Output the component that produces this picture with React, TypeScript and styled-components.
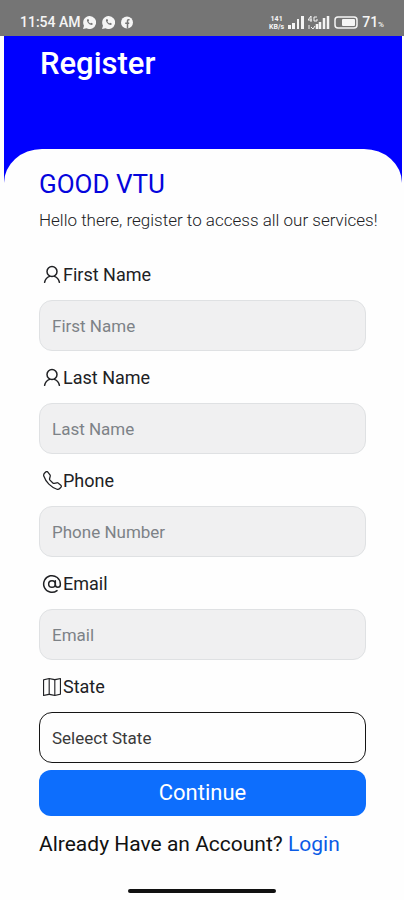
import React from "react";
import styled, { createGlobalStyle } from "styled-components";
import { AtSign } from "lucide-react";
import { BsMap, BsTelephone } from "react-icons/bs";

const GlobalStyle = createGlobalStyle`
  * { box-sizing: border-box; }
  body {
    margin: 0;
    background: #fefefe;
    color: #202124;
    font-family: Roboto, "Liberation Sans", sans-serif;
  }
`;

const Screen = styled.div`
  display: flex;
  flex-direction: column;
  min-height: 100vh;
`;

const StatusBar = styled.div`
  display: flex;
  justify-content: space-between;
  height: 36px;
  padding: 9px 20px 0;
  background: #757575;
  color: #f5f5f5;
  font-size: 14px;
  font-weight: 500;
  line-height: 27px;
`;

const StatusGroup = styled.div<{ $gap: number }>`
  display: flex;
  align-items: center;
  gap: ${(p) => p.$gap}px;
  height: 27px;
`;

const NoticeIcons = styled.span`
  display: flex;
  gap: 6px;
  margin-left: 2px;
`;

const Speed = styled.span`
  display: flex;
  flex-direction: column;
  font-size: 7px;
  font-weight: 700;
  line-height: 8px;
  text-align: center;
`;

const Level = styled.span`
  display: flex;
  align-items: center;
`;

const Percent = styled.small`
  padding-top: 4px;
  font-size: 8px;
  line-height: 12px;
`;

const Hero = styled.header`
  margin: 0 2px 0 4px;
  background: #0000ff;
`;

const Title = styled.h1`
  height: 113px;
  margin: 0;
  padding: 10px 36px 0;
  color: #fff;
  font-size: 31px;
  font-weight: 500;
  line-height: 36px;
`;

const CardTop = styled.div`
  height: 34px;
  border-radius: 38px 38px 0 0 / 34px 34px 0 0;
  background: #fefefe;
`;

const Card = styled.main`
  margin-top: -15px;
  padding: 0 38px 0 39px;
`;

const Brand = styled.h2`
  margin: 0;
  color: #0505dc;
  font-size: 26px;
  font-weight: 400;
  line-height: 32px;
`;

const Intro = styled.p`
  margin: 8px 0 30px;
  font-size: 17px;
  font-weight: 300;
  line-height: 24px;
  white-space: nowrap;
`;

const Form = styled.form`
  display: flex;
  flex-direction: column;
`;

const Field = styled.div`
  display: flex;
  flex-direction: column;
  gap: 13px;
  margin-bottom: 14px;

  &:last-of-type { margin-bottom: 7px; }
`;

const Label = styled.label`
  display: flex;
  align-items: center;
  gap: 1px;
  height: 25px;
  padding-left: 3px;
  font-size: 18px;
  line-height: 25px;
`;

const control = `
  width: 100%;
  height: 51px;
  padding: 0 12px;
  border-radius: 13px;
  font-family: inherit;
  font-size: 17px;
  outline: none;
`;

const Input = styled.input`
  ${control}
  border: 1px solid #dfe1e3;
  background: #f0f0f1;
  color: #202124;

  &::placeholder { color: #7d8287; opacity: 1; }
`;

const Select = styled.select`
  ${control}
  appearance: none;
  border: 1px solid #151515;
  background: #fefefe;
  color: #3a3a3a;
`;

const Submit = styled.button`
  height: 46px;
  border: 0;
  border-radius: 12px;
  background: #0d6efd;
  color: #fff;
  font-family: inherit;
  font-size: 22px;
  line-height: 28px;
`;

const LoginLine = styled.p`
  margin: 14px 0 0;
  color: #111;
  font-size: 21px;
  line-height: 28px;
  white-space: nowrap;
`;

const LoginLink = styled.a`
  color: #0b5be6;
  text-decoration: none;
`;

const HomeBar = styled.div`
  align-self: center;
  width: 148px;
  height: 4px;
  margin: auto 0 7px;
  border-radius: 2px;
  background: #111;
`;

const PersonIcon = () => (
  <svg width="20" height="20" viewBox="0 0 20 20" fill="none" stroke="currentColor" strokeWidth="1.5" strokeLinecap="round" aria-hidden="true">
    <circle cx="10" cy="6.500" r="5" />
    <path d="M2.600 17.300c.6-3 2.400-5 5-5.900M12.400 11.400c2.600.9 4.400 2.900 5 5.900" />
  </svg>
);

const PhoneIcon = () => <BsTelephone size={19} />;
const AtIcon = () => <AtSign size={20} strokeWidth={1.8} />;
const MapIcon = () => <BsMap size={18} />;

const IconBox = styled.span`
  display: flex;
  justify-content: center;
  width: 20px;
`;

const fields = [
  { id: "first", label: "First Name", hint: "First Name", type: "text", Icon: PersonIcon },
  { id: "last", label: "Last Name", hint: "Last Name", type: "text", Icon: PersonIcon },
  { id: "phone", label: "Phone", hint: "Phone Number", type: "tel", Icon: PhoneIcon },
  { id: "email", label: "Email", hint: "Email", type: "email", Icon: AtIcon },
];

const ChatBadge = () => (
  <svg width="13" height="13" viewBox="0 0 13 13" aria-hidden="true">
    <path d="M6.500 0a6.500 6.500 0 1 1-3 12.200L0 13l1-3.300A6.500 6.500 0 0 1 6.500 0z" fill="currentColor" />
    <path d="M4 3.500c-.6 2.400 2.600 5.800 5.300 5.500l.4-1.400-1.600-.9-.9.8C6.300 7 5.700 6.300 5.400 5.500l.7-.8-.7-1.600z" fill="#757575" />
  </svg>
);

const SocialBadge = () => (
  <svg width="12" height="13" viewBox="0 0 12 13" aria-hidden="true">
    <circle cx="6" cy="6.500" r="6" fill="currentColor" />
    <path d="M6.500 12.500V5c0-1 .6-1.500 2-1.300M4.200 7.200h4" fill="none" stroke="#757575" strokeWidth="1.500" />
  </svg>
);

const SignalBars = () => (
  <svg width="16" height="13" viewBox="0 0 16 13" fill="currentColor" aria-hidden="true">
    <path d="M0 9h3v4H0zM4 7h3v6H4zM9 3h2v10H9zM13 0h3v13h-3z" />
  </svg>
);

const DataSignal = () => (
  <svg width="22" height="13" viewBox="0 0 22 13" fill="none" stroke="currentColor" aria-hidden="true">
    <path d="M3 0L0 4h4M3 0v6M9 1H6v4h3V3M1 9v4M3 11l2 2 2-3" />
    <path d="M9 8v5M12 6v7M16 2v11M20 0v13" strokeWidth="2.5" />
  </svg>
);

const Battery = () => (
  <svg width="24" height="13" viewBox="0 0 24 13" fill="none" aria-hidden="true">
    <rect x="1" y="1" width="22" height="11" rx="3" stroke="currentColor" strokeWidth="1.5" />
    <rect x="8" y="3" width="13" height="7" rx="1" fill="currentColor" />
  </svg>
);

export default function App() {
  return (
    <Screen>
      <GlobalStyle />
      <StatusBar>
        <StatusGroup $gap={0}>
          <span>11:54 AM</span>
          <NoticeIcons>
            <ChatBadge />
            <ChatBadge />
            <SocialBadge />
          </NoticeIcons>
        </StatusGroup>
        <StatusGroup $gap={4}>
          <Speed>
            <span>141</span>
            <span>KB/s</span>
          </Speed>
          <SignalBars />
          <DataSignal />
          <Battery />
          <Level>
            71<Percent>%</Percent>
          </Level>
        </StatusGroup>
      </StatusBar>
      <Hero>
        <Title>Register</Title>
        <CardTop />
      </Hero>
      <Card>
        <Brand>GOOD VTU</Brand>
        <Intro>Hello there, register to access all our services!</Intro>
        <Form onSubmit={(e) => e.preventDefault()}>
          {fields.map(({ id, label, hint, type, Icon }) => (
            <Field key={id}>
              <Label htmlFor={id}>
                <IconBox>
                  <Icon />
                </IconBox>
                {label}
              </Label>
              <Input id={id} type={type} placeholder={hint} />
            </Field>
          ))}
          <Field>
            <Label htmlFor="state">
              <IconBox>
                <MapIcon />
              </IconBox>
              State
            </Label>
            <Select id="state">
              <option>Seleect State</option>
            </Select>
          </Field>
          <Submit type="submit">Continue</Submit>
        </Form>
        <LoginLine>
          Already Have an Account? <LoginLink href="#login">Login</LoginLink>
        </LoginLine>
      </Card>
      <HomeBar />
    </Screen>
  );
}
